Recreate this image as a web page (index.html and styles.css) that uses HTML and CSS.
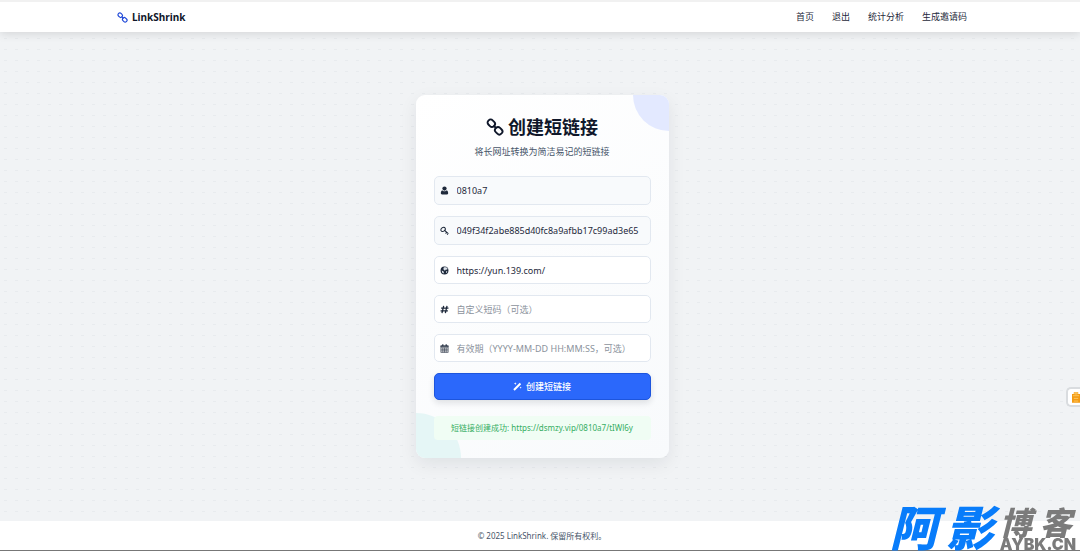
FILE: index.html
```html
<!DOCTYPE html>
<html lang="zh-CN">
<head>
<meta charset="utf-8">
<meta name="viewport" content="width=device-width, initial-scale=1">
<title>LinkShrink</title>
<link rel="stylesheet" href="styles.css">
</head>
<body>
<svg class="defs" aria-hidden="true">
  <symbol id="chain" viewBox="0 0 18 18">
    <g fill="none" stroke="currentColor" stroke-width="1.9">
      <rect x="1.400" y="2.200" width="7.800" height="6" rx="2.800" transform="rotate(45 5.300 5.200)"/>
      <rect x="8.800" y="9.800" width="7.800" height="6" rx="2.800" transform="rotate(45 12.700 12.800)"/>
      <path d="M7.500 7.500l3 3"/>
    </g>
  </symbol>
</svg>
<header class="header">
  <div class="header-inner">
    <a class="brand" href="#"><svg class="brand-icon" aria-hidden="true"><use href="#chain"/></svg>LinkShrink</a>
    <nav class="nav">
      <a href="#">首页</a>
      <a href="#">退出</a>
      <a href="#">统计分析</a>
      <a href="#">生成邀请码</a>
    </nav>
  </div>
</header>
<main class="main">
  <section class="card">
    <h1 class="title"><svg class="title-icon" aria-hidden="true"><use href="#chain"/></svg>创建短链接</h1>
    <p class="subtitle">将长网址转换为简洁易记的短链接</p>
    <form class="form">
      <div class="field">
        <svg class="field-icon" viewBox="0 0 16 16" aria-hidden="true"><circle cx="8" cy="4.500" r="3.800"/><path d="M4.200 7.500C2 8.200 1.500 10.500 1.500 13c0 1.500 1 2 2 2h9c1 0 2-.5 2-2 0-2.500-.5-4.800-2.700-5.500C10.500 9.800 5.500 9.800 4.200 7.500z"/></svg>
        <input class="input readonly" type="text" aria-label="用户名" value="0810a7" readonly>
      </div>
      <div class="field">
        <svg class="field-icon" viewBox="0 0 16 16" aria-hidden="true"><g fill="none" stroke="currentColor" stroke-width="1.800"><ellipse cx="5.500" cy="6" rx="4.300" ry="3.300" transform="rotate(-35 5.500 6)"/><path d="M8.300 8l6.500 5.500M10 13.500l2.200-3M12.800 15.500l1.700-2.500"/></g></svg>
        <input class="input readonly" type="text" aria-label="密钥" value="049f34f2abe885d40fc8a9afbb17c99ad3e65" readonly>
      </div>
      <div class="field">
        <svg class="field-icon" viewBox="0 0 16 16" aria-hidden="true"><circle cx="8" cy="8" r="7"/><path class="land" d="M7 2l4 0 2.500 2.500-1 2-2-.5-1.500 2-2-.5-1-2.500zM3 8l3 1.500 1 2.500-1 1.500-2-1.500zM11 9.500l2-.5-1 3-1.500.5z"/></svg>
        <input class="input" type="text" aria-label="长网址" value="https://yun.139.com/">
      </div>
      <div class="field">
        <svg class="field-icon" viewBox="0 0 16 16" aria-hidden="true"><path d="M6.500 1.500l-3 13M12.500 1.500l-3 13M2 5.500h13M1 10.500h13" fill="none" stroke="currentColor" stroke-width="2.300"/></svg>
        <input class="input" type="text" aria-label="自定义短码" placeholder="自定义短码（可选）">
      </div>
      <div class="field">
        <svg class="field-icon" viewBox="0 0 16 16" aria-hidden="true"><path d="M1.500 3h13v12h-13zM1.500 6.500h13M5 6.500V15M8 6.500V15M11 6.500V15M1.500 9.300h13M1.500 12.200h13" fill="none" stroke="currentColor"/><path d="M1 3h14v2H1zM4 .5h2V4H4zM10 .5h2V4h-2z"/></svg>
        <input class="input" type="text" aria-label="有效期" placeholder="有效期（YYYY-MM-DD HH:MM:SS，可选）">
      </div>
      <button class="submit" type="button"><svg class="submit-icon" viewBox="0 0 16 16" aria-hidden="true"><path d="M.5 13L12 1.500 14.500 4 3 15.500z"/><path d="M4 .5l.7 1.800L6.500 3l-1.800.7L4 5.500l-.7-1.800L1.500 3l1.800-.7zM13.500 8l.5 1.500 1.500.5-1.500.5-.5 1.500-.5-1.500-1.500-.5 1.500-.5z"/></svg>创建短链接</button>
    </form>
    <p class="result" role="status">短链接创建成功: https://dsmzy.vip/0810a7/tIWl6y</p>
  </section>
</main>
<footer class="footer">© 2025 LinkShrink. 保留所有权利。</footer>
<button class="side-tab" type="button" aria-label="工具"><svg class="side-icon" viewBox="0 0 9 12" aria-hidden="true"><path fill="#f39a12" d="M2 0h5v2h2v10H0V2h2z"/><path d="M3 1h3v1H3zM1 4h7M2 7h5M2 10h5" fill="none" stroke="#ffcb66"/></svg></button>
<div class="watermark">
  <span class="mark-main"><span>阿</span><span>影</span></span>
  <span class="mark-side"><span class="mark-name"><span>博</span><span>客</span></span><span class="mark-url">AYBK.CN</span></span>
</div>
</body>
</html>
```
FILE: styles.css
```css
* { box-sizing: border-box; }

body {
  margin: 0;
  min-height: 100vh;
  display: flex;
  flex-direction: column;
  border-top: 2px solid #f1f1f1;
  border-bottom: 1px solid #777;
  background-color: #f1f3f5;
  background-image: radial-gradient(ellipse 2px 1px, #e8ebee 50%, transparent 100%);
  background-size: 11px 11px;
  color: #1e293b;
  font-family: "Noto Sans", "Noto Sans CJK SC", sans-serif;
  font-size: 9px;
  line-height: 14px;
}

.defs { position: absolute; width: 0; height: 0; }

a { color: inherit; text-decoration: none; }

.header {
  background: #fff;
  box-shadow: 0 2px 10px rgba(0, 0, 0, .12);
}

.header-inner {
  display: flex;
  align-items: center;
  justify-content: space-between;
  max-width: 854px;
  height: 30px;
  margin: 0 auto;
  padding-left: 4px;
}

.brand {
  display: flex;
  align-items: center;
  gap: 4px;
  color: #0f172a;
  font-size: 10px;
  font-weight: 700;
}

.brand-icon { width: 11px; height: 11px; color: #2049d8; }

.nav { display: flex; gap: 18px; }

.main {
  flex: 1;
  display: flex;
  align-items: center;
  justify-content: center;
  padding: 24px 0 24px 4px;
}

.card {
  position: relative;
  z-index: 0;
  overflow: hidden;
  width: 253px;
  padding: 18px;
  border-radius: 9px;
  background: linear-gradient(145deg, #fff, #f8fafc);
  box-shadow: 0 6px 18px rgba(15, 23, 42, .08);
  text-align: center;
}

.card::before,
.card::after {
  content: "";
  position: absolute;
  z-index: -1;
  border-radius: 50%;
}

.card::before {
  top: -36px;
  right: -36px;
  width: 72px;
  height: 72px;
  background: #e3e9ff;
}

.card::after {
  bottom: -45px;
  left: -45px;
  width: 90px;
  height: 90px;
  background: #e5f6f6;
}

.title {
  display: flex;
  align-items: center;
  justify-content: center;
  gap: 4px;
  margin: 0;
  color: #0f172a;
  font-size: 18px;
  font-weight: 700;
  line-height: 28px;
}

.title-icon { width: 18px; height: 18px; }

.subtitle { margin: 4px 0 17px; color: #475569; }

.form { display: grid; gap: 11px; }

.field { position: relative; display: flex; }

.field-icon {
  position: absolute;
  top: 10px;
  left: 6px;
  width: 9px;
  height: 9px;
  fill: currentColor;
}

.land { fill: #dce2ea; }

.input {
  width: 100%;
  height: 28px;
  padding: 5px 8px 5px 22px;
  border: 1px solid #e2e8f0;
  border-radius: 5px;
  background: #fff;
  color: #1e293b;
  font: inherit;
  line-height: 16px;
}

.input.readonly { height: 29px; background: #f8fafc; }
.input::placeholder { color: #8b929c; opacity: 1; }

.submit {
  display: flex;
  align-items: center;
  justify-content: center;
  gap: 4px;
  height: 27px;
  padding: 0;
  border: 1px solid #1d55dd;
  border-radius: 5px;
  background: #2b68fb;
  box-shadow: 0 3px 6px rgba(15, 23, 42, .12);
  color: #fff;
  font: inherit;
  font-weight: 500;
}

.submit-icon { width: 9px; height: 9px; fill: currentColor; }

.result {
  margin: 16px 0 0;
  padding: 5px;
  border-radius: 4px;
  background: #f0fdf4;
  color: #35ad63;
  font-size: 8px;
}

.footer {
  padding: 8px 8px 7px 12px;
  background: #fff;
  color: #475569;
  font-size: 8px;
  text-align: center;
}

.side-tab {
  position: fixed;
  top: 387px;
  right: 0;
  display: flex;
  align-items: center;
  width: 14px;
  height: 20px;
  padding: 0 0 0 4px;
  border: 2px solid #d9dcdf;
  border-right: 0;
  border-radius: 5px 0 0 5px;
  background: #fff;
}

.side-icon { flex: none; width: 8px; height: 11px; }

.watermark {
  position: fixed;
  right: 4px;
  bottom: 0;
  display: flex;
  align-items: flex-end;
  gap: 6px;
  font-family: "Noto Sans CJK SC", sans-serif;
  font-weight: 900;
}

.mark-main {
  display: flex;
  gap: 8px;
  color: #087cfa;
  font-size: 48px;
  font-style: italic;
  line-height: 52px;
}

.mark-side { display: flex; flex-direction: column; color: #7b7b7b; }

.mark-name {
  display: flex;
  gap: 8px;
  font-size: 32px;
  font-style: italic;
  line-height: 32px;
}

.mark-url { font-family: Inter, sans-serif; font-size: 16px; line-height: 14px; }
```
